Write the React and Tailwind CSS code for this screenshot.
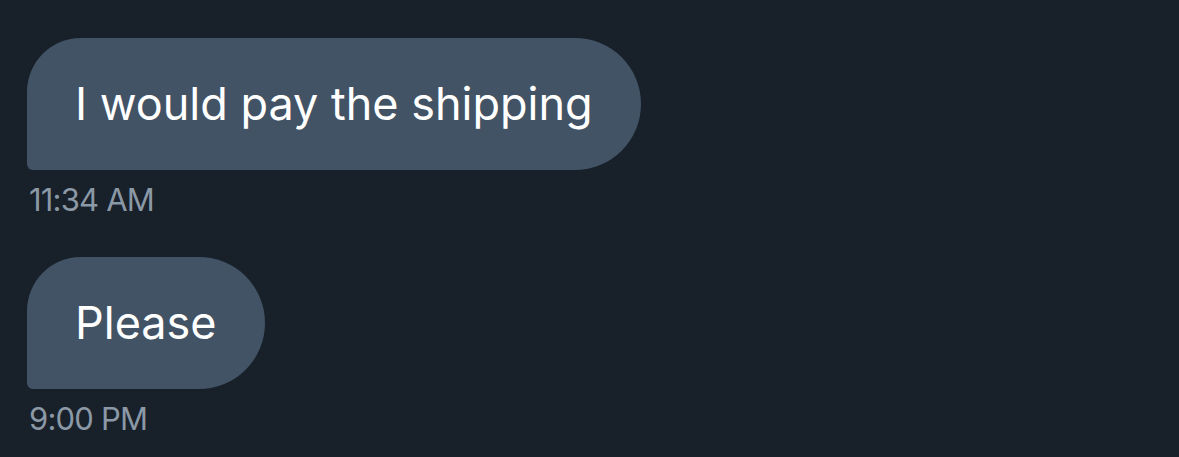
function Bubble({ text, time }) {
  return (
    <div className="flex flex-col items-start">
      <div className="bg-[#425365] text-white text-[45px] leading-[60px] py-[36px] pl-[48px] pr-[48px] rounded-tl-[54px] rounded-tr-[66px] rounded-br-[66px] rounded-bl-[6px]">
        {text}
      </div>
      <div className="text-[#8b98a5] text-[31px] leading-[40px] mt-[10px] pl-[2px] tracking-[-0.8px]">{time}</div>
    </div>
  );
}

export default function App() {
  return (
    <div
      className="w-[1179px] h-[457px] bg-[#18202a] pt-[38px] pl-[27px] flex flex-col gap-[37px] overflow-hidden"
      style={{ fontFamily: '"Inter", "Liberation Sans", sans-serif' }}
    >
      <Bubble text="I would pay the shipping" time="11:34 AM" />
      <Bubble text="Please" time="9:00 PM" />
    </div>
  );
}
